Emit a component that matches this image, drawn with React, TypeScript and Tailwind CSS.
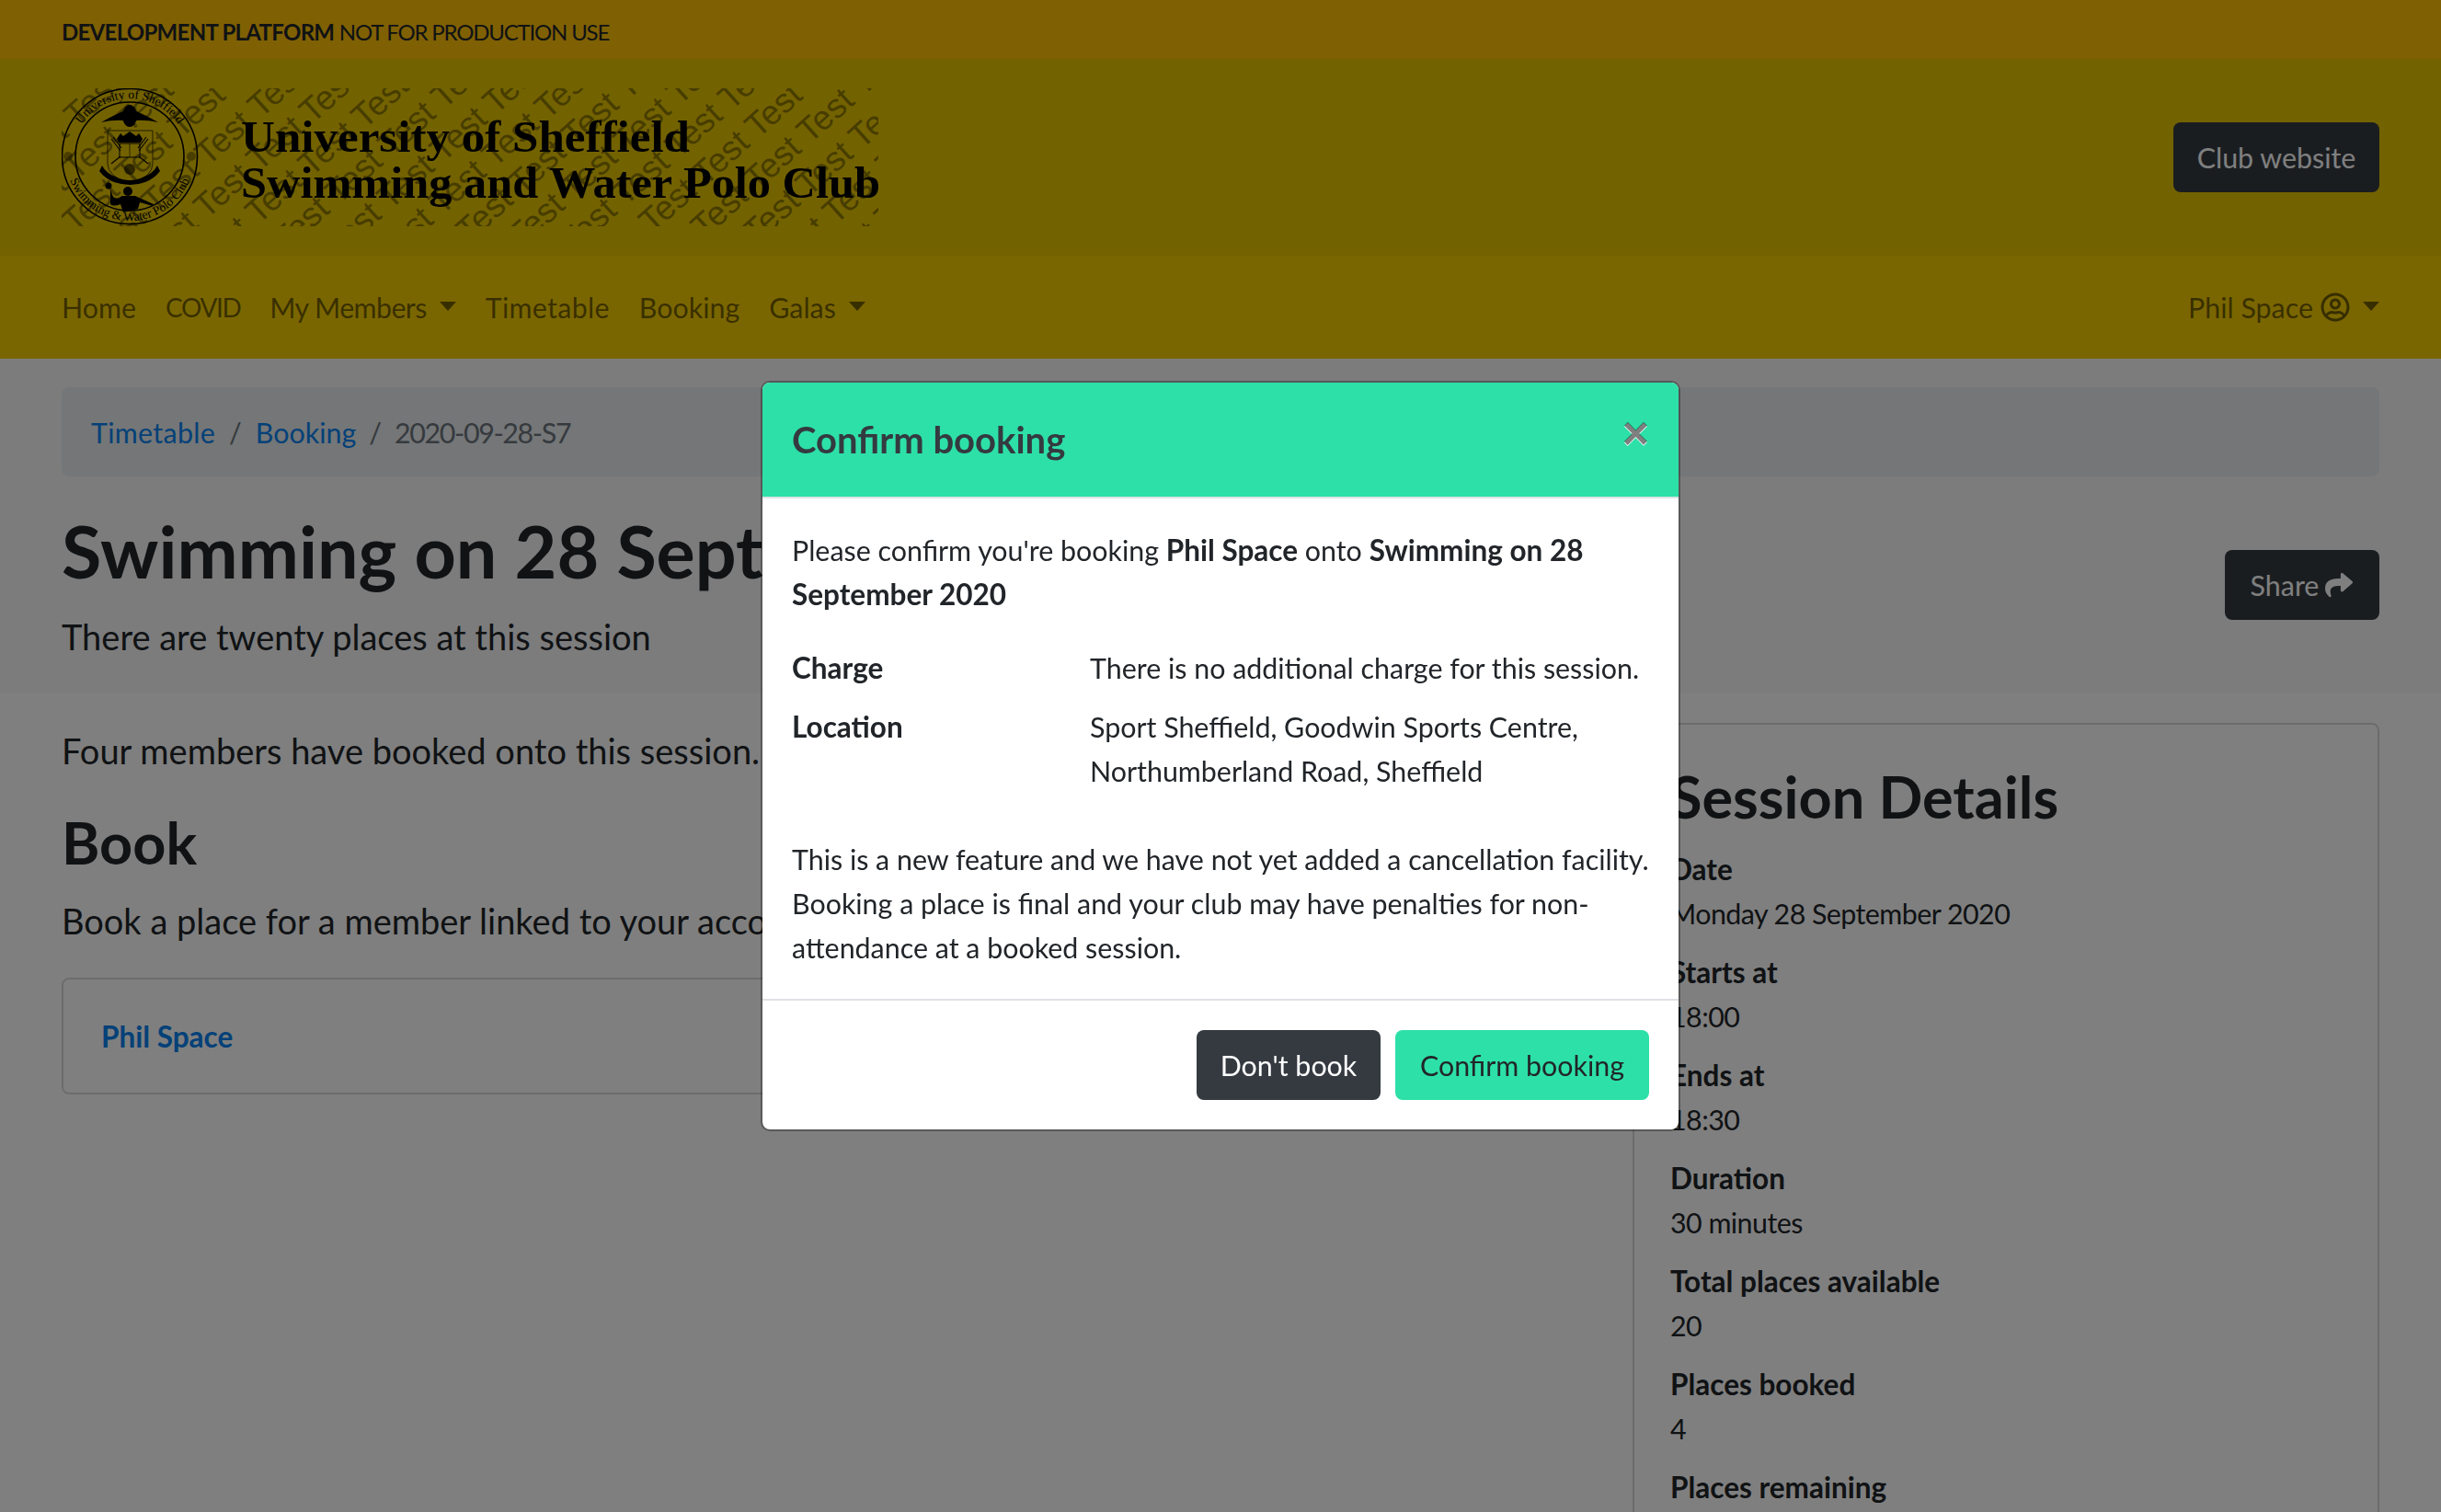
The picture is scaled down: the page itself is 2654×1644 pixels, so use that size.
import { FaRegUserCircle, FaShare } from 'react-icons/fa'

const sessionDetails = [
  ['Date', 'Monday 28 September 2020'],
  ['Starts at', '18:00'],
  ['Ends at', '18:30'],
  ['Duration', '30 minutes'],
  ['Total places available', '20'],
  ['Places booked', '4'],
  ['Places remaining', '16'],
]

const watermarkLines = Array.from({ length: 24 }, (_, i) => i)

function Caret() {
  return <span className="inline-block ml-[14px] mb-[3px] border-t-[10px] border-x-[9px] border-x-transparent border-t-current" />
}

function Logo() {
  const wm = 'Test Test Test Test Test Test Test Test Test Test Test Test Test Test Test Test'
  return (
    <svg width="888" height="150" viewBox="0 0 888 150" className="block">
      <defs>
        <path id="crest-top" d="M 11 74 A 63 63 0 0 1 137 74" />
        <path id="crest-bottom" d="M 4 74 A 70 70 0 0 0 144 74" />
      </defs>
      <g fill="#000" fillOpacity="0.4" fontFamily="'Liberation Sans', sans-serif" fontSize="37">
        <g transform="rotate(-42 444 75)">
          {watermarkLines.map(i => (
            <text key={i} x={-240 + (i % 3) * 38} y={-360 + i * 42}>{wm}</text>
          ))}
        </g>
      </g>

      {/* crest */}
      <g fill="none" stroke="#000">
        <circle cx="74" cy="74" r="73.500" strokeWidth="1.6" />
        <circle cx="74" cy="74" r="59" strokeWidth="1.6" />
        <path d="M50 46h49v36q0 14-24.500 22q-24.500-8-24.500-22z" strokeWidth="0.7" />
        <rect x="63" y="60" width="22" height="15" strokeWidth="1" />
        <path d="M74 60v15" strokeWidth="0.6" />
        <path d="M54 55l10 13M94 55l-10 13M56 53l9 12M92 53l-9 12M54 82l10-8M94 82l-10-8" strokeWidth="1.1" />
      </g>
      <g fill="#000" fontFamily="'Liberation Serif', serif" fontSize="13.500">
        <text>
          <textPath href="#crest-top" startOffset="50%" textAnchor="middle">University of Sheffield</textPath>
        </text>
        <text>
          <textPath href="#crest-bottom" startOffset="50%" textAnchor="middle">Swimming &amp; Water Polo Club</textPath>
        </text>
      </g>
      <g fill="#000">
        <ellipse cx="74" cy="30" rx="8" ry="12" />
        <path d="M43 37q14-8 24-12l1 10q-12-1-25 2zM105 37q-14-8-24-12l-1 10q12-1 25 2z" />
        <path d="M60 55l4-6 3 3 7-5 7 5 3-3 4 6-2 4H62z" />
        <path d="M44 84q4 8 14 12q16 8 32 0q10-4 14-12l3 6q-6 8-16 12q-16 6-34 0q-10-4-16-12z" />
        <circle cx="74" cy="88" r="6" fillOpacity="0.6" />
        <circle cx="51" cy="106" r="3.500" />
        <circle cx="72" cy="112" r="5" />
        <path d="M53 110l3 8q4 3 8 0l2-1h14l20 9-1 2-14-4-2 7-16 4-3-9q-8 3-11 0z" />
        <circle cx="7" cy="74" r="5" fillOpacity="0.35" />
        <circle cx="141" cy="74" r="5" fillOpacity="0.35" />
      </g>

      <g fill="#000" fontFamily="'Liberation Serif', serif" fontWeight="700" fontSize="48">
        <text x="195" y="69" textLength="488" lengthAdjust="spacingAndGlyphs">University of Sheffield</text>
        <text x="195" y="119" textLength="695" lengthAdjust="spacingAndGlyphs">Swimming and Water Polo Club</text>
      </g>
    </svg>
  )
}

function NavLink({ children, caret, className }: { children: string; caret?: boolean; className?: string }) {
  return (
    <a className={`flex items-center whitespace-nowrap ${className ?? ''}`}>
      {children}
      {caret && <Caret />}
    </a>
  )
}

function ConfirmModal() {
  return (
    <div className="fixed inset-0 flex justify-center items-start pt-[414px] bg-black/50">
      <div className="w-[1000px] bg-white bg-clip-padding border-2 border-black/30 rounded-[10px] overflow-hidden text-[#212529]">
        <div className="flex items-start justify-between h-[124px] p-[32px] bg-[#2de0a8] text-[#343a40]">
          <h5 className="text-[40px] leading-[60px] font-bold">Confirm booking</h5>
          <span className="text-[50px] leading-[46px] font-bold font-['Liberation_Sans',sans-serif] text-black/50 [text-shadow:0_1px_0_#fff]">×</span>
        </div>
        <div className="border-t-2 border-[#dee2e6] p-[32px]">
          <p className="mb-[32px]">
            Please confirm you're booking <b className="text-[31.5px]">Phil Space</b> onto <b className="text-[31.5px]">Swimming on 28 September 2020</b>
          </p>
          <dl className="grid grid-cols-[324px_1fr] gap-y-[16px] mb-[48px]">
            <dt className="font-bold text-[31.5px]">Charge</dt>
            <dd>There is no additional charge for this session.</dd>
            <dt className="font-bold text-[31.5px]">Location</dt>
            <dd>Sport Sheffield, Goodwin Sports Centre, <br />Northumberland Road, Sheffield</dd>
          </dl>
          <p>
            This is a new feature and we have not yet added a cancellation facility. Booking a place is final and your club may have penalties for non-attendance at a booked session.
          </p>
        </div>
        <div className="flex justify-end gap-[16px] p-[32px] border-t-2 border-[#dee2e6]">
          <button className="h-[76px] w-[200px] rounded-[8px] bg-[#343a40] text-white">Don't book</button>
          <button className="h-[76px] w-[276px] rounded-[8px] bg-[#2de0a8] text-[#212529]">Confirm booking</button>
        </div>
      </div>
    </div>
  )
}

export default function App() {
  return (
    <div className="h-screen overflow-hidden bg-white text-[#212529] text-[30.4px] leading-[48px] font-['Lato',sans-serif]">
      <div className="h-[64px] bg-[#ffc107] px-[67px] pt-[5px] flex items-center text-[24px] tracking-[-0.03em]">
        <b>DEVELOPMENT PLATFORM</b>&nbsp;<span className="tracking-[-0.05em]">NOT FOR PRODUCTION USE</span>
      </div>

      <header className="h-[214px] bg-[#e6c400] px-[67px] flex items-center justify-between">
        <Logo />
        <a className="h-[76px] w-[224px] flex items-center justify-center rounded-[8px] bg-[#343a40] text-white">Club website</a>
      </header>

      <nav className="h-[112px] bg-[#f4cc00] px-[67px] flex items-center justify-between text-black/55">
        <div className="flex items-center gap-[32px]">
          <NavLink>Home</NavLink>
          <NavLink className="text-[28px] tracking-[-0.05em]">COVID</NavLink>
          <NavLink caret className="tracking-[-0.02em]">My Members</NavLink>
          <NavLink className="tracking-[0.01em]">Timetable</NavLink>
          <NavLink>Booking</NavLink>
          <NavLink caret>Galas</NavLink>
        </div>
        <a className="flex items-center whitespace-nowrap">
          Phil Space
          <FaRegUserCircle className="ml-[8px] w-[32px] h-[32px]" />
          <Caret />
        </a>
      </nav>

      <section className="h-[363px] bg-[#f8f9fa] px-[67px] pt-[31px]">
        <ol className="h-[97px] flex items-center px-[32px] rounded-[8px] bg-[#e9ecef]">
          <li className="text-[#0882f0] tracking-[0.01em]">Timetable</li>
          <li className="px-[15px] text-[#6c757d]">/</li>
          <li className="text-[#0882f0]">Booking</li>
          <li className="px-[14px] text-[#6c757d]">/</li>
          <li className="text-[#6c757d] tracking-[-0.045em]">2020-09-28-S7</li>
        </ol>
        <div className="flex items-center justify-between mt-[35px]">
          <div>
            <h1 className="text-[79px] leading-[92px] font-bold mb-[17px] whitespace-nowrap">Swimming on 28 September 2020</h1>
            <p className="text-[38px] leading-[60px]">There are twenty places at this session</p>
          </div>
          <a className="h-[76px] w-[168px] -mt-[3px] flex items-center justify-center gap-[6px] rounded-[8px] bg-[#343a40] text-white">
            Share <FaShare className="w-[32px] h-[30px]" />
          </a>
        </div>
      </section>

      <main className="flex justify-between px-[67px] pt-[33px]">
        <div className="w-[1660px]">
          <p className="text-[38px] leading-[60px] mb-[32px]">Four members have booked onto this session.</p>
          <h2 className="text-[63px] leading-[75px] font-bold mb-[18px]">Book</h2>
          <p className="text-[38px] leading-[60px] mb-[32px]">Book a place for a member linked to your account</p>
          <div className="h-[127px] flex items-center px-[41px] border-2 border-black/15 rounded-[8px] font-bold text-[31.5px] text-[#0882f0]">
            Phil Space
          </div>
        </div>
        <aside className="w-[812px] border-2 border-black/15 rounded-[8px] pl-[39px] pr-[40px] pt-[40px]">
          <h2 className="text-[63px] leading-[75px] font-bold mb-[18px]">Session Details</h2>
          <dl className="flex flex-col gap-[16px]">
            {sessionDetails.map(([label, value]) => (
              <div key={label}>
                <dt className="font-bold text-[31.5px]">{label}</dt>
                <dd className="tracking-[-0.018em]">{value}</dd>
              </div>
            ))}
          </dl>
        </aside>
      </main>

      <ConfirmModal />
    </div>
  )
}
